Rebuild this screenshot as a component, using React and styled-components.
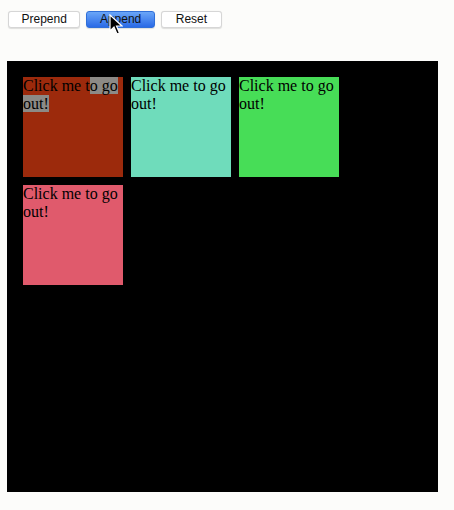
import React from 'react';
import styled, {createGlobalStyle} from 'styled-components';

const Global = createGlobalStyle`
    html, body {
        margin: 0;
        padding: 0;
        background: #fcfcfa;
    }
    body {
        width: 454px;
        height: 510px;
        overflow: hidden;
    }
`;

const Page = styled.div`
    padding: 11px 0 0 7px;
`;

const Toolbar = styled.div`
    position: relative;
    display: flex;
    gap: 6px;
    padding-left: 1px;
    height: 17px;
`;

const Btn = styled.button`
    height: 17px;
    padding: 0 ${props => props.pad}px;
    font-family: 'Liberation Sans', Arial, sans-serif;
    font-size: 12px;
    line-height: 15px;
    color: #111;
    border-radius: 3px;
    border: 1px solid ${props => props.primary ? '#2f6fd8' : '#d6d6d6'};
    background: ${props => props.primary
        ? 'linear-gradient(#6aa6f8, #2a6ae6)'
        : '#ffffff'};
    box-shadow: 0 0.5px 1px rgba(0, 0, 0, 0.12);
`;

const Cursor = styled.svg`
    position: absolute;
    left: 102px;
    top: 3px;
`;

const Stage = styled.div`
    margin-top: 33px;
    width: 399px;
    height: 399px;
    padding: 16px;
    background: #000;
    display: flex;
    flex-wrap: wrap;
    align-content: flex-start;
    gap: 8px;
`;

const Box = styled.div`
    width: 100px;
    height: 100px;
    background: ${props => props.color};
    font-family: 'Liberation Serif', 'Times New Roman', serif;
    font-size: 16px;
    line-height: 18px;
    color: #000;
`;

const Selected = styled.span`
    background: #8c8a86;
`;

const boxes = ['#9c2a0c', '#6fdcbb', '#47dd57', '#e05a6c'];

export default function App() {
    return (
        <Page>
            <Global/>
            <Toolbar>
                <Btn pad={12.5}>Prepend</Btn>
                <Btn pad={12.5} primary>Append</Btn>
                <Btn pad={14}>Reset</Btn>
                <Cursor width="14" height="22" viewBox="0 0 14 22">
                    <path d="M1 1 L1 17 L5 13 L8 20 L10.5 19 L7.5 12 L13 12 Z"
                          fill="#000" stroke="#fff" strokeWidth="1.2"/>
                </Cursor>
            </Toolbar>
            <Stage>
                {boxes.map((c, i) => (
                    <Box key={i} color={c}>
                        {i === 0
                            ? <>Click me t<Selected>o go out!</Selected></>
                            : 'Click me to go out!'}
                    </Box>
                ))}
            </Stage>
        </Page>
    );
}
